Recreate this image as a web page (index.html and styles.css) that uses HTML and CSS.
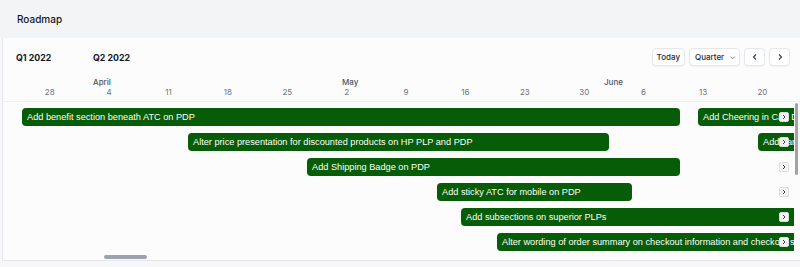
FILE: index.html
```html
<!doctype html>
<html lang="en">
<head>
    <meta charset="UTF-8" />
    <link rel="stylesheet" href="styles.css">
</head>
<body>
    <div class="roadmap-page">
        <div class="page-header">
            <h1 class="page-title">Roadmap</h1>
        </div>

        <div class="timeline-panel">
            <div class="timeline-toolbar">
                <div class="quarters">
                    <span class="quarter-label" style="width: 77px;">Q1 2022</span>
                    <span class="quarter-label">Q2 2022</span>
                </div>
                <div class="toolbar-controls">
                    <button class="tool-btn">Today</button>
                    <button class="tool-btn select-btn">Quarter
                        <svg width="7" height="7" viewBox="0 0 8 8"><path d="M1.5 3l2.5 2.5 2.5-2.5" fill="none" stroke="#6b7280" stroke-width="1"/></svg>
                    </button>
                    <button class="tool-btn icon-btn">
                        <svg width="8" height="8" viewBox="0 0 8 8"><path d="M5 1.5L2.5 4 5 6.5" fill="none" stroke="#374151" stroke-width="1.1"/></svg>
                    </button>
                    <button class="tool-btn icon-btn">
                        <svg width="8" height="8" viewBox="0 0 8 8"><path d="M3 1.5L5.5 4 3 6.5" fill="none" stroke="#374151" stroke-width="1.1"/></svg>
                    </button>
                </div>
            </div>

            <div class="timescale">
                <div class="months-row">
                    <span class="month-label" style="left: 90px;">April</span>
                    <span class="month-label" style="left: 339px;">May</span>
                    <span class="month-label" style="left: 601px;">June</span>
                </div>
                <div class="days-row">
                    <span class="day-label">28</span>
                    <span class="day-label">4</span>
                    <span class="day-label">11</span>
                    <span class="day-label">18</span>
                    <span class="day-label">25</span>
                    <span class="day-label">2</span>
                    <span class="day-label">9</span>
                    <span class="day-label">16</span>
                    <span class="day-label">23</span>
                    <span class="day-label">30</span>
                    <span class="day-label">6</span>
                    <span class="day-label">13</span>
                    <span class="day-label">20</span>
                </div>
            </div>

            <div class="timeline-body">
                <div class="rows">
                    <div class="row">
                        <div class="bar" style="left: 19px; width: 658px;">Add benefit section beneath ATC on PDP</div>
                        <div class="bar" style="left: 695px; width: 220px;">Add Cheering in Cart Drawer</div>
                        <span class="jump-btn"><svg width="6" height="6" viewBox="0 0 6 6"><path d="M2 1l2 2-2 2" fill="none" stroke="#374151" stroke-width="1"/></svg></span>
                    </div>
                    <div class="row">
                        <div class="bar" style="left: 185px; width: 421px;">Alter price presentation for discounted products on HP PLP and PDP</div>
                        <div class="bar" style="left: 755px; width: 200px;">Add banner</div>
                        <span class="jump-btn"><svg width="6" height="6" viewBox="0 0 6 6"><path d="M2 1l2 2-2 2" fill="none" stroke="#374151" stroke-width="1"/></svg></span>
                    </div>
                    <div class="row">
                        <div class="bar" style="left: 304px; width: 373px;">Add Shipping Badge on PDP</div>
                        <div class="bar" style="left: 791px; width: 100px;">Add</div>
                        <span class="jump-btn"><svg width="6" height="6" viewBox="0 0 6 6"><path d="M2 1l2 2-2 2" fill="none" stroke="#374151" stroke-width="1"/></svg></span>
                    </div>
                    <div class="row">
                        <div class="bar" style="left: 434px; width: 195px;">Add sticky ATC for mobile on PDP</div>
                        <span class="jump-btn"><svg width="6" height="6" viewBox="0 0 6 6"><path d="M2 1l2 2-2 2" fill="none" stroke="#374151" stroke-width="1"/></svg></span>
                    </div>
                    <div class="row">
                        <div class="bar" style="left: 458px; width: 360px;">Add subsections on superior PLPs</div>
                        <span class="jump-btn"><svg width="6" height="6" viewBox="0 0 6 6"><path d="M2 1l2 2-2 2" fill="none" stroke="#374151" stroke-width="1"/></svg></span>
                    </div>
                    <div class="row">
                        <div class="bar" style="left: 494px; width: 360px;">Alter wording of order summary on checkout information and checkout shipping</div>
                        <span class="jump-btn"><svg width="6" height="6" viewBox="0 0 6 6"><path d="M2 1l2 2-2 2" fill="none" stroke="#374151" stroke-width="1"/></svg></span>
                    </div>
                </div>
                <div class="v-scroll">
                    <div class="v-thumb"></div>
                </div>
            </div>

            <div class="h-scroll">
                <div class="h-thumb"></div>
            </div>
        </div>
    </div>
</body>
</html>
```

FILE: styles.css
```css
body {
    margin: 0;
    padding: 0;
    font-family: "Inter", "Liberation Sans", sans-serif;
    background: #f7f7f9;
    color: #111827;
}

.roadmap-page {
    width: 800px;
    height: 267px;
    overflow: hidden;
}

.page-header {
    height: 38px;
    background: #f3f4f6;
    display: flex;
    align-items: center;
    padding-left: 17px;
}

.page-title {
    margin: 0;
    font-size: 10px;
    font-weight: 500;
    color: #111827;
}

.timeline-panel {
    margin-left: 2px;
    border-left: 1px solid #e5e7eb;
    background: #fcfcfd;
}

.timeline-toolbar {
    display: flex;
    justify-content: space-between;
    align-items: center;
    padding: 10px 10px 11px 13px;
}

.quarters {
    display: flex;
}

.quarter-label {
    font-size: 8.8px;
    font-weight: 700;
    color: #111827;
}

.toolbar-controls {
    display: flex;
    gap: 4px;
}

.tool-btn {
    height: 18px;
    padding: 0 4px;
    border: 1px solid #e5e7eb;
    border-radius: 4px;
    background: #fff;
    box-shadow: 0 1px 1px rgba(0, 0, 0, 0.04);
    font-family: inherit;
    font-size: 8px;
    font-weight: 500;
    color: #1f2937;
    display: flex;
    align-items: center;
    gap: 5px;
}

.select-btn {
    padding: 0 5px;
    width: 51px;
    justify-content: space-between;
}

.select-btn svg {
    flex-shrink: 0;
}

.icon-btn {
    width: 21px;
    justify-content: center;
    padding: 0;
}

.timescale {
    border-bottom: 1px solid #eef0f3;
    padding-bottom: 4px;
}

.months-row {
    position: relative;
    height: 10px;
}

.month-label {
    position: absolute;
    top: 0;
    font-size: 8px;
    font-weight: 500;
    line-height: 10px;
    color: #4b5563;
}

.days-row {
    display: flex;
    padding-left: 17px;
    height: 10px;
}

.day-label {
    width: 59.4px;
    flex-shrink: 0;
    text-align: center;
    font-size: 8px;
    line-height: 10px;
    color: #6b7280;
}

.timeline-body {
    display: flex;
}

.rows {
    width: 792px;
    overflow: hidden;
}

.row {
    position: relative;
    height: 25px;
}

.bar {
    position: absolute;
    top: 6px;
    height: 18px;
    box-sizing: border-box;
    padding-left: 5px;
    background: #075c07;
    border-radius: 4px;
    color: #fff;
    font-family: "Liberation Sans", sans-serif;
    font-size: 9.2px;
    line-height: 18px;
    white-space: nowrap;
    overflow: hidden;
}

.jump-btn {
    position: absolute;
    top: 10px;
    right: 5px;
    width: 10px;
    height: 10px;
    box-sizing: border-box;
    border: 1px solid #d9dce1;
    border-radius: 2px;
    background: #f5f5f6;
    display: flex;
    align-items: center;
    justify-content: center;
}

.v-scroll {
    width: 5px;
    padding-left: 1px;
}

.v-thumb {
    width: 3px;
    height: 72px;
    margin-top: 1px;
    background: #a3a3a3;
    border-radius: 2px;
}

.h-scroll {
    height: 9px;
    border-bottom: 1px solid #e5e7eb;
    box-sizing: border-box;
    padding-top: 3px;
}

.h-thumb {
    margin-left: 101px;
    width: 43px;
    height: 4px;
    border-radius: 2px;
    background: #9ca3af;
}
```
